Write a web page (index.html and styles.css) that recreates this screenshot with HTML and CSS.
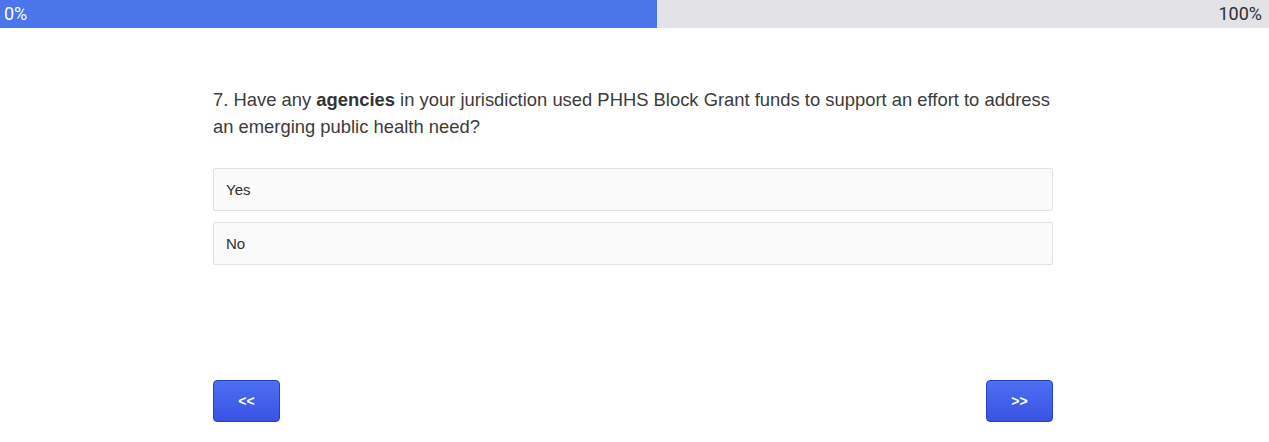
FILE: index.html
```html
<!DOCTYPE html>
<html>
<head>
<meta charset="utf-8">
<link rel="stylesheet" href="styles.css">
</head>
<body>
<div class="progress">
  <div class="progress-fill" style="width:51.77%"></div>
  <span class="progress-label left">0%</span>
  <span class="progress-label right">100%</span>
</div>
<main class="survey">
  <p class="question">7. Have any <strong>agencies</strong> in your jurisdiction used PHHS Block Grant funds to support an effort to address an emerging public health need?</p>
  <div class="options">
    <div class="option">Yes</div>
    <div class="option">No</div>
  </div>
  <div class="nav">
    <button class="nav-btn">&lt;&lt;</button>
    <button class="nav-btn">&gt;&gt;</button>
  </div>
</main>
</body>
</html>
```
FILE: styles.css
```css
html, body {
  margin: 0;
  padding: 0;
  background: #ffffff;
}
body {
  font-family: "Liberation Sans", Arial, sans-serif;
}
.progress {
  position: relative;
  height: 28px;
  background: #e3e2e7;
  display: flex;
  justify-content: space-between;
  align-items: center;
  font-family: Roboto, "Liberation Sans", sans-serif;
  font-size: 18px;
}
.progress-fill {
  position: absolute;
  left: 0;
  top: 0;
  bottom: 0;
  background: #4a76ea;
}
.progress-label {
  position: relative;
  line-height: 28px;
}
.progress-label.left {
  color: #ffffff;
  padding-left: 4px;
}
.progress-label.right {
  color: #2f2f2f;
  padding-right: 7px;
}
.survey {
  width: 840px;
  margin: 0 auto;
  padding-top: 58px;
  position: relative;
  left: -1.5px;
}
.question {
  margin: 0;
  font-size: 18.4px;
  line-height: 27px;
  color: #3b3b3b;
}
.question strong {
  color: #333333;
}
.options {
  margin-top: 28px;
  display: flex;
  flex-direction: column;
  gap: 11px;
}
.option {
  background: #fafafa;
  border: 1px solid #e2e2e2;
  border-radius: 2px;
  padding: 12px 12px;
  font-size: 15px;
  line-height: 17px;
  color: #2e2e2e;
}
.nav {
  margin-top: 115px;
  display: flex;
  justify-content: space-between;
}
.nav-btn {
  width: 67px;
  height: 42px;
  border: 1px solid #2a3fc0;
  border-radius: 4px;
  background: linear-gradient(#4d6ff2, #3a52e4);
  color: #ffffff;
  font-family: "Liberation Sans", Arial, sans-serif;
  font-weight: bold;
  font-size: 14px;
  padding: 0;
}
```
